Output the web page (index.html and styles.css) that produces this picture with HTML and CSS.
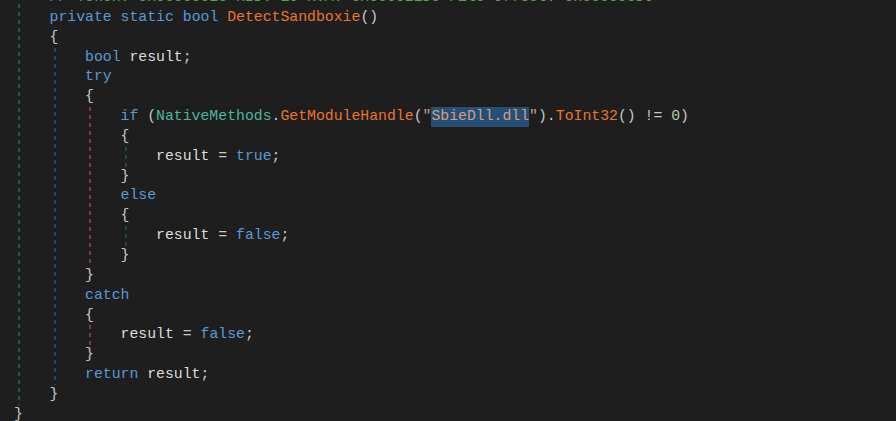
FILE: index.html
```html
<!DOCTYPE html>
<html>
<head>
<meta charset="utf-8">
<link rel="stylesheet" href="styles.css">
</head>
<body>
<div class="code">
  <div class="block g1">
    <div class="line"><span class="cm">// Token: 0x06000013 RID: 19 RVA: 0x000021D0 File Offset: 0x000003D0</span></div>
    <div class="line"><span class="kw">private</span> <span class="kw">static</span> <span class="kw">bool</span> <span class="fn">DetectSandboxie</span><span class="p">()</span></div>
    <div class="line"><span class="p">{</span></div>
    <div class="block bl">
      <div class="line"><span class="kw">bool</span> <span class="v">result</span><span class="p">;</span></div>
      <div class="line"><span class="kw">try</span></div>
      <div class="line"><span class="p">{</span></div>
      <div class="block rd">
        <div class="line"><span class="kw">if</span> <span class="p">(</span><span class="ty">NativeMethods</span><span class="p">.</span><span class="fn">GetModuleHandle</span><span class="p">(</span><span class="str">"<span class="sel">SbieDll.dll</span>"</span><span class="p">).</span><span class="fn">ToInt32</span><span class="p">() != </span><span class="num">0</span><span class="p">)</span></div>
        <div class="line"><span class="p">{</span></div>
        <div class="block g2">
          <div class="line"><span class="v">result</span> <span class="p">=</span> <span class="kw">true</span><span class="p">;</span></div>
        </div>
        <div class="line"><span class="p">}</span></div>
        <div class="line"><span class="kw">else</span></div>
        <div class="line"><span class="p">{</span></div>
        <div class="block g2">
          <div class="line"><span class="v">result</span> <span class="p">=</span> <span class="kw">false</span><span class="p">;</span></div>
        </div>
        <div class="line"><span class="p">}</span></div>
      </div>
      <div class="line"><span class="p">}</span></div>
      <div class="line"><span class="kw">catch</span></div>
      <div class="line"><span class="p">{</span></div>
      <div class="block rd">
        <div class="line"><span class="v">result</span> <span class="p">=</span> <span class="kw">false</span><span class="p">;</span></div>
      </div>
      <div class="line"><span class="p">}</span></div>
      <div class="line"><span class="kw">return</span> <span class="v">result</span><span class="p">;</span></div>
    </div>
    <div class="line"><span class="p">}</span></div>
  </div>
  <div class="line"><span class="p">}</span></div>
</div>
</body>
</html>
```

FILE: styles.css
```css
html, body {
  margin: 0;
  padding: 0;
  background: #1e1e1e;
  height: 100%;
  overflow: hidden;
}

.code {
  margin-top: -12px;
  padding-left: 14px;
  font-family: "Liberation Mono", "DejaVu Sans Mono", monospace;
  font-size: 14.8px;
  line-height: 19.85px;
  color: #dcdcdc;
}

.line {
  height: 19.85px;
  white-space: pre;
}

.block {
  margin-left: 4px;
  padding-left: 31.52px;
  background-repeat: no-repeat;
  background-position: left top;
  background-size: 2px 100%;
}

.g1 { background-image: repeating-linear-gradient(to bottom, #1d5a44 0 4px, transparent 4px 8px); }
.bl { background-image: repeating-linear-gradient(to bottom, #1c4a6e 0 4px, transparent 4px 8px); }
.rd { background-image: repeating-linear-gradient(to bottom, #7a3b35 0 4px, transparent 4px 8px); }
.g2 { background-image: repeating-linear-gradient(to bottom, #1f4a2c 0 4px, transparent 4px 8px); }

.kw { color: #569cd6; }
.fn { color: #ea7628; }
.ty { color: #48b89e; }
.str { color: #d69d85; }
.num { color: #b5cea8; }
.p { color: #c8c8c8; }
.v { color: #dcdcdc; }
.cm { color: #57a64a; }
.sel {
  display: inline-block;
  background: #264f78;
  height: 19.85px;
  vertical-align: top;
}
```
